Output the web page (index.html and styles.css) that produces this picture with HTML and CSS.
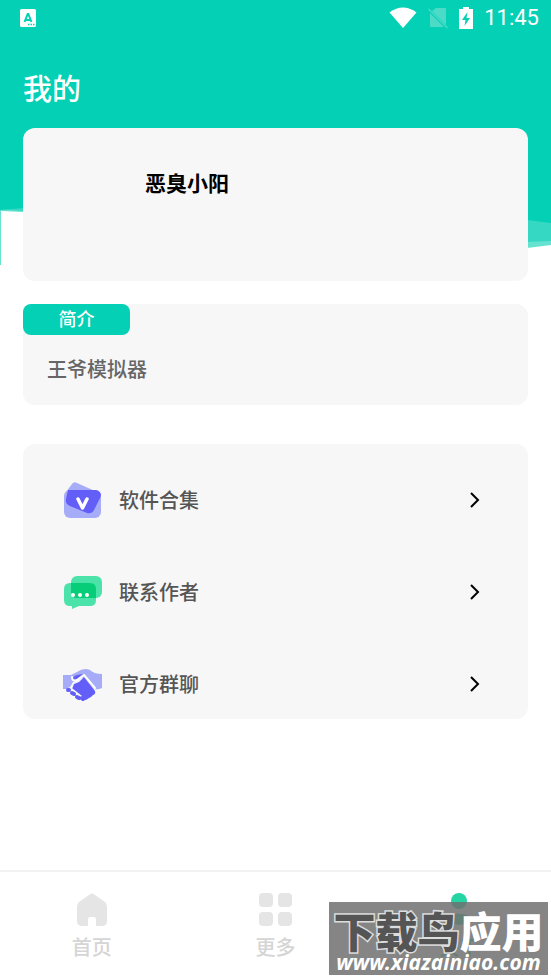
FILE: index.html
```html
<!DOCTYPE html>
<html lang="zh-CN">
<head>
<meta charset="utf-8">
<meta name="viewport" content="width=device-width, initial-scale=1">
<title>我的</title>
<link rel="stylesheet" href="styles.css">
</head>
<body>
<svg class="backdrop" viewBox="0 0 551 270" preserveAspectRatio="none" aria-hidden="true">
  <path fill="#65e2d0" d="M0 200H551V245L527 248L23 212L1 211V265H0Z"/>
  <path fill="#35d9c3" d="M0 209L30 207L500 218H551V241L527 242L23 211Z"/>
  <path fill="#03d0b4" d="M0 0H551V223L527 220L23 208L0 210Z"/>
</svg>
<header class="status">
  <svg class="keyboard" viewBox="0 0 18 20" aria-hidden="true">
    <rect x="1" y="1" width="16" height="18" rx="1.5" fill="#fff"/>
    <path d="M5.5 14L8.700 6h.6L12.500 14M6.500 12h5" fill="none" stroke="#03d0b4" stroke-width="2"/>
    <path d="M9 16.500h1.500M11.500 16.500H13M14 16.500h1.500" stroke="#03d0b4" stroke-width="1.500"/>
  </svg>
  <div class="status-right">
    <svg width="28" height="24" viewBox="0 0 28 24" aria-hidden="true"><path fill="#fff" d="M.5 6.500Q14-3.500 27.500 6.500L14 22Z"/></svg>
    <svg width="20" height="24" viewBox="0 0 20 24" aria-hidden="true"><path fill="#4bdbc7" d="M8 2h9q1 0 1 1v16L4 5ZM2 7l14 14H3q-1 0-1-1Z"/><path d="M.5 3l19 19" stroke="#4bdbc7" stroke-width="1.500"/></svg>
    <svg width="14" height="24" viewBox="0 0 14 24" aria-hidden="true"><path fill="#fff" d="M4 1h6v2h4v20H0V3h4Z"/><path fill="#03d0b4" d="M8.500 6L3 14h3.500L5.500 20L11 12H7.500Z"/></svg>
    <time>11:45</time>
  </div>
</header>
<main>
  <h1>我的</h1>
  <section class="card profile"><h2>恶臭小阳</h2></section>
  <section class="card intro">
    <h3>简介</h3>
    <p>王爷模拟器</p>
  </section>
  <nav class="card links">
    <a href="#software">
      <svg class="icon" viewBox="0 0 40 40" aria-hidden="true">
        <rect x="1" y="10" width="37" height="28" rx="6" fill="#a6acf8"/>
        <path fill="#a6acf8" d="M3 12L9 4q2-3 5-1L32 11Z"/>
        <path fill="#625ef7" d="M5 10H33q7 2 4 8L31 30q-2 4-7 3L7 26q-5-2-4-7Z"/>
        <path d="M15 19l4.500 9L24 19" fill="none" stroke="#fff" stroke-width="3.500" stroke-linecap="round" stroke-linejoin="round"/>
      </svg>
      <span>软件合集</span>
      <svg class="arrow" viewBox="0 0 10 16" aria-hidden="true"><path d="M1 1l7 7-7 7"/></svg>
    </a>
    <a href="#contact">
      <svg class="icon" viewBox="0 0 40 40" aria-hidden="true">
        <rect x="8" y="4" width="31" height="22" rx="6" fill="#4be3a9"/>
        <path fill="#4be3a9" d="M7 11H26q7 0 7 7v10q0 6-6 6H16l-7 3v-3H7q-6 0-6-6V17q0-6 6-6Z"/>
        <path fill="#07cd78" d="M8 11H27q6 0 6 6v9H14q-6 0-6-6Z"/>
        <g fill="#fff"><circle cx="10" cy="23" r="2"/><circle cx="17" cy="23" r="2"/><circle cx="24" cy="23" r="2"/></g>
      </svg>
      <span>联系作者</span>
      <svg class="arrow" viewBox="0 0 10 16" aria-hidden="true"><path d="M1 1l7 7-7 7"/></svg>
    </a>
    <a href="#group">
      <svg class="icon" viewBox="0 0 40 40" aria-hidden="true">
        <path fill="#a6acf8" d="M0 11H8L14 8Q21 3 27 6Q31 10 39 10V24Q35 26 31 25L21 13L10 18L6 25H0Z"/>
        <path fill="#625ef7" d="M10 15q0-3 4-4l6-1-6 5q-2 1-4 0Z"/>
        <path fill="#625ef7" d="M21 13L32 27q1 3-2 4l-2 2-2 1-3 2-2 0-3 0L9 25 11 20 16 18Z"/>
        <path fill="none" stroke="#fff" stroke-width="2" stroke-linecap="round" stroke-linejoin="round" d="M9 13q0 5 5 3L21 11L32 24"/>
        <path d="M7 27l9 7" stroke="#f7f7f7" stroke-width="7" stroke-linecap="round"/>
        <path d="M5 26l1 0M9 29l2 1M14 33l2 1M19 34l1 1" stroke="#625ef7" stroke-width="4" stroke-linecap="round"/>
      </svg>
      <span>官方群聊</span>
      <svg class="arrow" viewBox="0 0 10 16" aria-hidden="true"><path d="M1 1l7 7-7 7"/></svg>
    </a>
  </nav>
</main>
<footer>
  <nav class="tabs">
    <a href="#home">
      <svg viewBox="0 0 36 36" aria-hidden="true"><path fill="#e5e5e5" d="M15 3q3-3 6 0L31 10q2 2 2 5V29q0 5-5 5H22V27q0-2-2-2H16q-2 0-2 2V34H8q-5 0-5-5V15q0-3 2-5Z"/></svg>
      <span>首页</span>
    </a>
    <a href="#more">
      <svg viewBox="0 0 36 36" fill="#e5e5e5" aria-hidden="true"><rect x="2" y="1" width="14" height="14" rx="4"/><rect x="21" y="1" width="14" height="14" rx="4"/><rect x="2" y="20" width="14" height="14" rx="4"/><rect x="21" y="20" width="14" height="14" rx="4"/></svg>
      <span>更多</span>
    </a>
    <a href="#about" class="active">
      <svg viewBox="0 0 36 36" fill="#24d5a3" aria-hidden="true"><circle cx="18" cy="9" r="8"/><path d="M8 24q10-5 20 0v6q-10 6-20 0Z"/></svg>
      <span>关于</span>
    </a>
  </nav>
  <div class="watermark">
    <div class="brand"><span>下载鸟</span>应用</div>
    <div class="site">www.xiazainiao.com</div>
  </div>
</footer>
</body>
</html>
```
FILE: styles.css
```css
* {
  box-sizing: border-box;
}

body {
  position: relative;
  display: flex;
  flex-direction: column;
  min-height: 100vh;
  margin: 0;
  background: #fff;
  color: #555;
  font-family: "Noto Sans CJK SC", sans-serif;
  font-size: 20px;
  font-weight: 500;
}

h1, h2, h3, p {
  margin: 0;
  font-weight: 500;
}

a {
  color: inherit;
  text-decoration: none;
}

svg {
  display: block;
}

.backdrop {
  position: absolute;
  z-index: -1;
  top: 0;
  left: 0;
  width: 100%;
  height: 270px;
}

.status {
  display: flex;
  align-items: center;
  justify-content: space-between;
  height: 36px;
  padding: 0 12px 0 19px;
}

.keyboard {
  width: 18px;
  height: 20px;
}

.status-right {
  display: flex;
  align-items: center;
  gap: 11px;
  color: #fff;
}

.status time {
  font-family: Roboto, sans-serif;
  font-size: 22px;
  font-weight: 400;
  line-height: 40px;
}

main {
  flex: 1;
  padding: 32px 23px 24px;
}

h1 {
  margin-bottom: 22px;
  color: #fff;
  font-size: 29px;
  line-height: 38px;
}

.card {
  border-radius: 12px;
  background: #f7f7f7;
}

.profile {
  min-height: 153px;
  margin-bottom: 23px;
  padding: 39px 24px 0 122px;
}

h2 {
  color: #000;
  font-size: 21px;
  font-weight: 700;
  line-height: 30px;
}

.intro {
  min-height: 101px;
  margin-bottom: 39px;
}

h3 {
  width: 107px;
  height: 31px;
  border-radius: 8px;
  background: #03d0b4;
  color: #fff;
  font-size: 18px;
  line-height: 28px;
  text-align: center;
}

.intro p {
  padding: 19px 24px;
  color: #666;
  line-height: 30px;
}

.links {
  display: flex;
  flex-direction: column;
  gap: 22px;
  padding-top: 21px;
}

.links a {
  display: flex;
  align-items: center;
  height: 70px;
  padding: 0 48px 0 40px;
}

.links span {
  flex: 1;
  margin-left: 16px;
  line-height: 30px;
}

.icon {
  width: 40px;
  height: 40px;
}

.arrow {
  width: 10px;
  height: 16px;
  fill: none;
  stroke: #000;
  stroke-width: 2;
}

footer {
  position: relative;
}

.tabs {
  display: grid;
  grid-template-columns: repeat(3, 1fr);
  height: 109px;
  padding-top: 20px;
  border-top: 2px solid #f3f3f3;
  color: #d5d5d5;
}

.tabs a {
  display: flex;
  flex-direction: column;
  align-items: center;
  gap: 4px;
}

.tabs svg {
  width: 36px;
  height: 36px;
}

.tabs span {
  line-height: 30px;
}

.tabs .active {
  color: #24d5a3;
}

.watermark {
  position: absolute;
  right: 3px;
  bottom: 4px;
  width: 219px;
  height: 73px;
  padding-top: 6px;
  background: rgba(112, 112, 112, 0.85);
  color: #fff;
  text-align: center;
  white-space: nowrap;
}

.brand {
  font-size: 42px;
  font-weight: 900;
  line-height: 44px;
}

.brand span {
  color: #555;
  -webkit-text-stroke: 3px #ddd;
  paint-order: stroke fill;
}

.site {
  font-family: "Noto Sans", sans-serif;
  font-size: 21px;
  font-style: italic;
  font-weight: 700;
  line-height: 20px;
}
```
